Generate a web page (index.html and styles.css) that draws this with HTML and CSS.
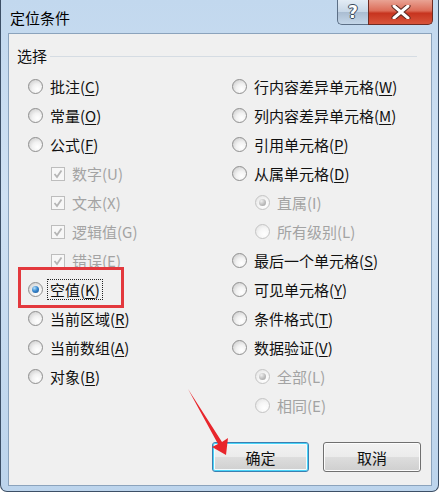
FILE: index.html
```html
<!DOCTYPE html>
<html lang="zh-CN">
<head>
    <meta charset="UTF-8">
    <title>定位条件</title>
    <link rel="stylesheet" href="styles.css">
</head>
<body>
    <div class="window">
        <div class="titlebar">
            <span class="title">定位条件</span>
            <div class="caption-buttons">
                <div class="cap help">?</div>
                <div class="cap close">
                    <svg width="20" height="14" viewBox="0 0 20 14">
                        <path d="M3 1 L17 13 M17 1 L3 13" stroke="#5a2a22" stroke-width="5" stroke-linecap="round"/>
                        <path d="M3 1 L17 13 M17 1 L3 13" stroke="#fff" stroke-width="3" stroke-linecap="round"/>
                    </svg>
                </div>
            </div>
        </div>

        <div class="client">
            <div class="group-head">
                <span>选择</span>
                <div class="group-line"></div>
            </div>

            <div class="columns">
                <!-- left column -->
                <div class="col">
                    <div class="row"><span class="radio"></span>批注(<u>C</u>)</div>
                    <div class="row"><span class="radio"></span>常量(<u>O</u>)</div>
                    <div class="row"><span class="radio"></span>公式(<u>F</u>)</div>
                    <div class="row sub disabled"><span class="check"><svg width="12" height="12" viewBox="0 0 12 12"><path d="M2.5 6 L5 9 L9.5 2.5" fill="none" stroke="#b5b5b5" stroke-width="1.8"/></svg></span>数字(U)</div>
                    <div class="row sub disabled"><span class="check"><svg width="12" height="12" viewBox="0 0 12 12"><path d="M2.5 6 L5 9 L9.5 2.5" fill="none" stroke="#b5b5b5" stroke-width="1.8"/></svg></span>文本(X)</div>
                    <div class="row sub disabled"><span class="check"><svg width="12" height="12" viewBox="0 0 12 12"><path d="M2.5 6 L5 9 L9.5 2.5" fill="none" stroke="#b5b5b5" stroke-width="1.8"/></svg></span>逻辑值(G)</div>
                    <div class="row sub disabled"><span class="check"><svg width="12" height="12" viewBox="0 0 12 12"><path d="M2.5 6 L5 9 L9.5 2.5" fill="none" stroke="#b5b5b5" stroke-width="1.8"/></svg></span>错误(E)</div>
                    <div class="row"><span class="radio checked"></span><span class="focus">空值(<u>K</u>)</span></div>
                    <div class="row"><span class="radio"></span>当前区域(<u>R</u>)</div>
                    <div class="row"><span class="radio"></span>当前数组(<u>A</u>)</div>
                    <div class="row"><span class="radio"></span>对象(<u>B</u>)</div>
                </div>

                <!-- right column -->
                <div class="col">
                    <div class="row"><span class="radio"></span>行内容差异单元格(<u>W</u>)</div>
                    <div class="row"><span class="radio"></span>列内容差异单元格(<u>M</u>)</div>
                    <div class="row"><span class="radio"></span>引用单元格(<u>P</u>)</div>
                    <div class="row"><span class="radio"></span>从属单元格(<u>D</u>)</div>
                    <div class="row sub disabled"><span class="radio checked"></span>直属(I)</div>
                    <div class="row sub disabled"><span class="radio"></span>所有级别(L)</div>
                    <div class="row"><span class="radio"></span>最后一个单元格(<u>S</u>)</div>
                    <div class="row"><span class="radio"></span>可见单元格(<u>Y</u>)</div>
                    <div class="row"><span class="radio"></span>条件格式(<u>T</u>)</div>
                    <div class="row"><span class="radio"></span>数据验证(<u>V</u>)</div>
                    <div class="row sub disabled"><span class="radio checked"></span>全部(L)</div>
                    <div class="row sub disabled"><span class="radio"></span>相同(E)</div>
                </div>
            </div>

            <div class="buttons">
                <button class="btn default">确定</button>
                <button class="btn">取消</button>
            </div>
        </div>

        <!-- annotations -->
        <div class="mark-box"></div>
        <svg class="mark-arrow" width="440" height="494" viewBox="0 0 440 494">
            <polygon points="188,389 222,442 228,438 226,455 212,447 218,444" fill="#e8262c"/>
        </svg>
    </div>
</body>
</html>
```

FILE: styles.css
```css
* {
    margin: 0;
    padding: 0;
    box-sizing: border-box;
}

body {
    width: 440px;
    height: 494px;
    background: #ffffff;
    font-family: "Noto Sans CJK SC", "Noto Sans", sans-serif;
    font-size: 15px;
    color: #111;
}

.window {
    position: relative;
    width: 439px;
    height: 492px;
    border: 1px solid #3c4f66;
    border-top: none;
    border-radius: 0 0 7px 7px;
    background: linear-gradient(180deg, #c2d8ee 0%, #cfe1f3 40%, #bcd4ec 100%);
    padding: 0 6px 5px 7px;
    display: flex;
    flex-direction: column;
}

.titlebar {
    height: 33px;
    display: flex;
    justify-content: space-between;
    align-items: flex-start;
}

.title {
    margin-top: 8px;
    margin-left: 2px;
    line-height: 20px;
    color: #000;
}

.caption-buttons {
    display: flex;
    margin-right: -1px;
}

.cap {
    height: 25px;
    border: 1px solid #5c6f86;
    border-top: none;
    display: flex;
    align-items: center;
    justify-content: center;
}

.help {
    width: 31px;
    border-radius: 0 0 0 5px;
    border-right: none;
    background: linear-gradient(180deg, #e3ecf5 0%, #c6d6e6 50%, #aabdd2 51%, #c4d6e8 100%);
    color: #fff;
    font-family: "DejaVu Sans", sans-serif;
    font-weight: bold;
    font-size: 17px;
    text-shadow: 0 0 1px #3b4a5c, 1px 0 0 #3b4a5c, -1px 0 0 #3b4a5c, 0 1px 0 #3b4a5c, 0 -1px 0 #3b4a5c;
}

.close {
    width: 65px;
    border-radius: 0 0 5px 0;
    border-color: #6e2b22;
    background: linear-gradient(180deg, #e9a394 0%, #dc6c58 45%, #c7341f 55%, #d8543b 100%);
}

.client {
    flex: 1;
    border: 1px solid #8ba3bc;
    background: #f0f0f0;
    padding: 12px 10px 0 19px;
    display: flex;
    flex-direction: column;
}

.group-head {
    display: flex;
    align-items: center;
    margin-left: -11px;
    height: 20px;
    line-height: 20px;
    margin-bottom: 6px;
}

.group-line {
    flex: 1;
    height: 1px;
    margin: 0 4px 0 3px;
    background: #d5dce3;
}

.columns {
    display: flex;
}

.col {
    width: 204px;
    flex-shrink: 0;
}

.col + .col {
    flex: 1;
    width: auto;
}

.row {
    height: 29px;
    display: flex;
    align-items: center;
    white-space: nowrap;
}

.row u {
    text-decoration-thickness: 1px;
    text-underline-offset: 2px;
}

.row.sub {
    padding-left: 23px;
}

.row.disabled {
    color: #a3a3a3;
}

.radio {
    position: relative;
    width: 15px;
    height: 15px;
    margin-right: 7px;
    border-radius: 50%;
    border: 1px solid #8f8f8f;
    background: radial-gradient(circle at 65% 70%, #ffffff 0%, #f2f2f2 40%, #c4c4c4 100%);
    flex-shrink: 0;
}

.radio.checked::after {
    content: "";
    position: absolute;
    left: 3px;
    top: 3px;
    width: 7px;
    height: 7px;
    border-radius: 50%;
    background: radial-gradient(circle at 35% 30%, #b6e0fa 0%, #3a8ad0 45%, #164c8e 100%);
}

.disabled .radio {
    border-color: #c4c4c4;
    background: radial-gradient(circle at 65% 70%, #ffffff 0%, #f6f6f6 45%, #dedede 100%);
}

.disabled .radio.checked::after {
    background: radial-gradient(circle at 35% 30%, #f0f0f0 0%, #bdbdbd 55%, #9e9e9e 100%);
}

.check {
    width: 14px;
    height: 14px;
    margin-right: 7px;
    border: 1px solid #bdbdbd;
    background: #f7f7f7;
    display: flex;
    align-items: center;
    justify-content: center;
    flex-shrink: 0;
}

.focus {
    margin-left: -2px;
    padding: 0 2px;
    line-height: 19px;
    outline: 1px dotted #222;
}

.buttons {
    display: flex;
    justify-content: flex-end;
    gap: 14px;
    margin-top: 22px;
}

.btn {
    width: 98px;
    height: 30px;
    border: 1px solid #707070;
    border-radius: 3px;
    background: linear-gradient(180deg, #f2f2f2 0%, #ebebeb 50%, #dddddd 51%, #cfcfcf 100%);
    font-family: inherit;
    font-size: 15px;
    color: #111;
    box-shadow: inset 0 0 0 1px #fcfcfc;
}

.btn.default {
    width: 97px;
    border-color: #3c7fb1;
    box-shadow: inset 0 0 0 1px #48d4f8, inset 0 0 0 2px #f4fbfe;
}

.mark-box {
    position: absolute;
    left: 17px;
    top: 267px;
    width: 106px;
    height: 41px;
    border: 3px solid #e3383d;
}

.mark-arrow {
    position: absolute;
    left: -1px;
    top: 0;
    pointer-events: none;
}
```
